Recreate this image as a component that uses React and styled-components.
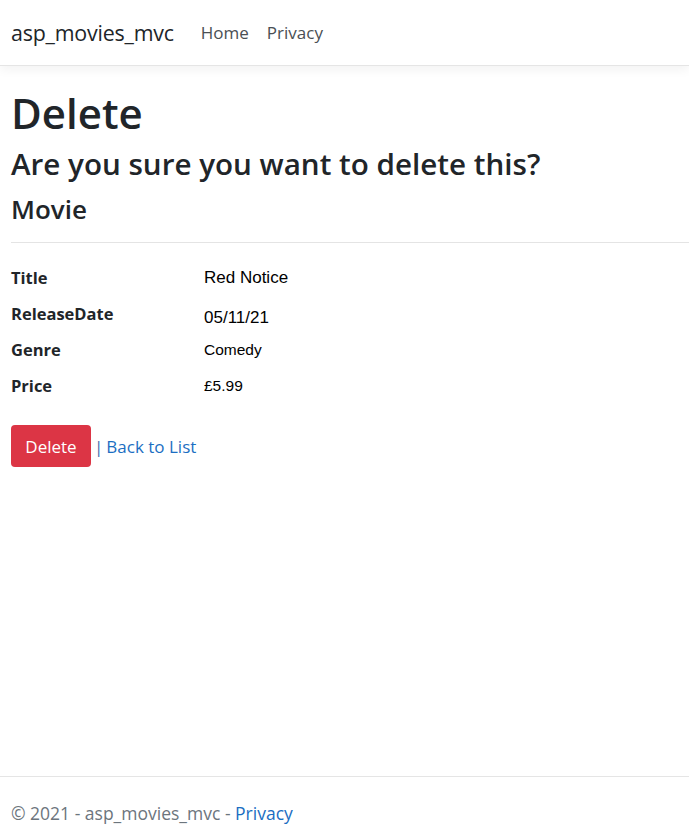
import React from 'react';
import styled, { createGlobalStyle } from 'styled-components';

const GlobalStyle = createGlobalStyle`
  html, body {
    margin: 0;
    padding: 0;
    height: 100%;
  }
  body {
    font-family: "Open Sans", "Noto Sans", sans-serif;
    font-size: 18px;
    color: #212529;
    background: #fff;
  }
  #root {
    min-height: 100%;
  }
`;

const Page = styled.div`
  display: flex;
  flex-direction: column;
  min-height: 834px;
`;

const Navbar = styled.nav`
  display: flex;
  align-items: center;
  height: 65px;
  padding: 0 11px;
  border-bottom: 1px solid #e5e5e5;
  box-shadow: 0 4px 10px rgba(0, 0, 0, 0.05);
`;

const Brand = styled.a`
  font-size: 21.4px;
  color: #212529;
  margin-right: 27px;
  text-decoration: none;
  letter-spacing: -0.2px;
`;

const NavLink = styled.a`
  font-size: 17px;
  color: #4a4f54;
  margin-right: 18px;
  text-decoration: none;
`;

const Main = styled.main`
  flex: 1;
  padding: 0 11px;
`;

const Title = styled.h1`
  font-size: 42px;
  font-weight: 600;
  margin: 22px 0 0;
  line-height: 1.2;
`;

const Subtitle = styled.h2`
  font-size: 29.6px;
  font-weight: 600;
  margin: 8px 0 0;
  line-height: 1.2;
`;

const Heading = styled.h4`
  font-size: 26px;
  font-weight: 600;
  margin: 12px 0 0;
  line-height: 1.2;
`;

const Rule = styled.hr`
  border: 0;
  border-top: 1px solid #e4e4e4;
  margin: 17px -11px 23px 0;
`;

const Details = styled.dl`
  display: grid;
  grid-template-columns: 193px 1fr;
  row-gap: 13px;
  margin: 0 0 28px;
`;

const Term = styled.dt`
  font-weight: 700;
  font-size: 16.5px;
  margin: 0;
  line-height: 23px;
`;

const Value = styled.dd`
  margin: 0;
  font-family: "Liberation Sans", Arial, sans-serif;
  font-size: ${p => p.$size}px;
  color: #000;
  line-height: 23px;
  transform: translateY(${p => p.$shift || 0}px);
`;

const Actions = styled.form`
  display: flex;
  align-items: center;
  gap: 3px;
  font-size: 17px;
`;

const DangerButton = styled.button`
  background: #dc3545;
  color: #fff;
  border: 0;
  border-radius: 4px;
  font-family: inherit;
  font-size: 17px;
  width: 80px;
  height: 42px;
  cursor: pointer;
`;

const Separator = styled.span`
  color: #3f6fae;
`;

const Link = styled.a`
  color: #1b6ec2;
  text-decoration: none;
`;

const Footer = styled.footer`
  border-top: 1px solid #e5e5e5;
  height: 58px;
  box-sizing: border-box;
  padding: 24px 11px 0;
  line-height: 24px;
  color: #6c757d;
  font-size: 17.5px;
`;

const rows = [
  { label: 'Title', value: 'Red Notice', size: 17 },
  { label: 'ReleaseDate', value: '05/11/21', size: 17, shift: 4 },
  { label: 'Genre', value: 'Comedy', size: 15.5 },
  { label: 'Price', value: '£5.99', size: 15.5 },
];

export default function App() {
  return (
    <Page>
      <GlobalStyle />
      <Navbar>
        <Brand href="#">asp_movies_mvc</Brand>
        <NavLink href="#">Home</NavLink>
        <NavLink href="#">Privacy</NavLink>
      </Navbar>
      <Main>
        <Title>Delete</Title>
        <Subtitle>Are you sure you want to delete this?</Subtitle>
        <Heading>Movie</Heading>
        <Rule />
        <Details>
          {rows.map(r => (
            <React.Fragment key={r.label}>
              <Term>{r.label}</Term>
              <Value $size={r.size} $shift={r.shift}>{r.value}</Value>
            </React.Fragment>
          ))}
        </Details>
        <Actions onSubmit={e => e.preventDefault()}>
          <DangerButton type="submit">Delete</DangerButton>
          <Separator>|</Separator>
          <Link href="#">Back to List</Link>
        </Actions>
      </Main>
      <Footer>
        © 2021 - asp_movies_mvc - <Link href="#">Privacy</Link>
      </Footer>
    </Page>
  );
}
